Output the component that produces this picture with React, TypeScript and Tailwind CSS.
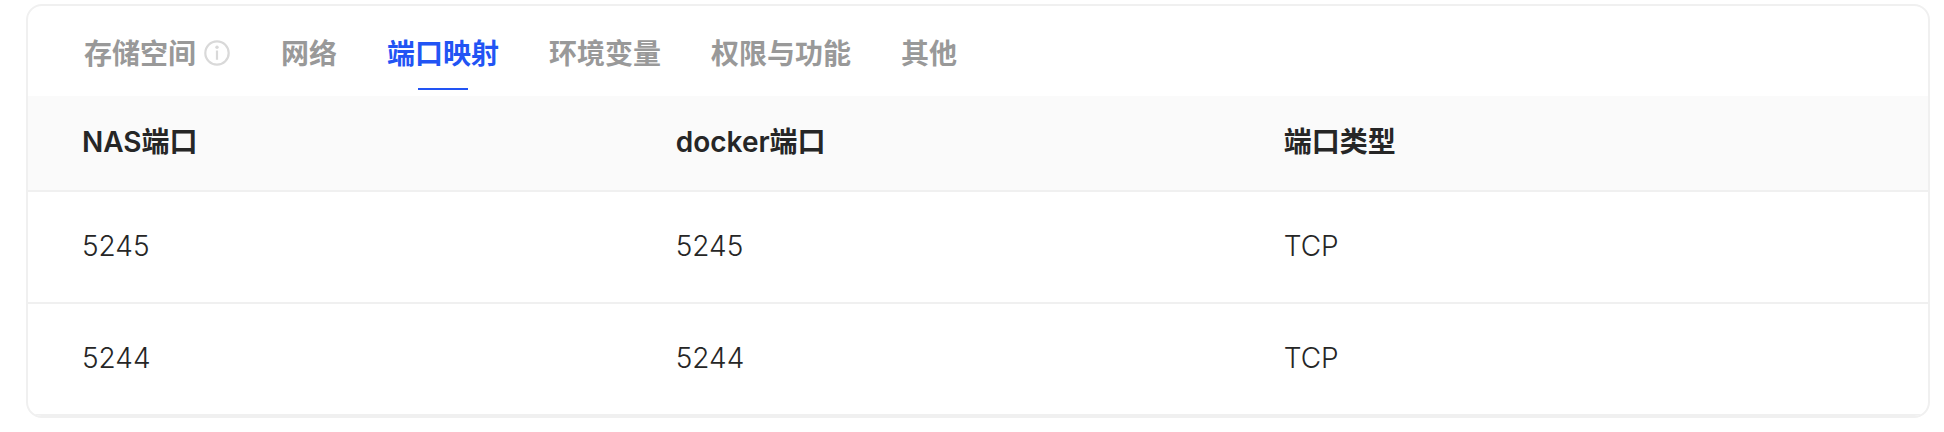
const tabs = ["存储空间", "网络", "端口映射", "环境变量", "权限与功能", "其他"];

const rows = [
  ["5245", "5245", "TCP"],
  ["5244", "5244", "TCP"],
];

function InfoIcon() {
  return (
    <svg viewBox="0 0 26 26" className="size-[26px] text-[#d9d9d9]" fill="none" stroke="currentColor" strokeWidth="2.2" aria-hidden="true">
      <circle cx="13" cy="13" r="11.7" />
      <path d="M13 10.4v9.4" />
      <circle cx="13" cy="7.2" r="1.7" fill="currentColor" stroke="none" />
    </svg>
  );
}

export default function App() {
  return (
    <main className="bg-white pt-1 pr-[14px] pb-[14px] pl-[26px] font-['Inter','Noto_Sans_CJK_SC',sans-serif] text-[28px] leading-10 text-[#262626]">
      <section className="overflow-hidden rounded-2xl border-2 border-[#f0f0f0]">
        <nav className="flex gap-[50px] px-14">
          {tabs.map((tab) => (
            <button
              key={tab}
              type="button"
              className={
                tab === "端口映射"
                  ? "flex h-[90px] flex-col items-center pt-7 font-bold text-[#2254f4]"
                  : "flex h-[90px] items-start gap-2 pt-7 font-bold text-[#999999]"
              }
            >
              {tab}
              {tab === "存储空间" && <span className="pt-1.5 pr-px"><InfoIcon /></span>}
              {tab === "端口映射" && <span className="mt-[14px] h-[2px] w-[50px] bg-[#2254f4]" />}
            </button>
          ))}
        </nav>
        <table className="w-full table-fixed border-separate border-spacing-0 text-left">
          <colgroup>
            <col className="w-[31.25%]" />
            <col className="w-[32%]" />
            <col />
          </colgroup>
          <thead className="bg-[#fafafa]">
            <tr className="h-24">
              {["NAS端口", "docker端口", "端口类型"].map((h) => (
                <th key={h} className="border-b-2 border-[#f0f0f0] pb-0.5 pl-[54px] font-semibold">{h}</th>
              ))}
            </tr>
          </thead>
          <tbody>
            {rows.map((row) => (
              <tr key={row[0]} className="h-28">
                {row.map((cell, i) => (
                  <td key={i} className="border-b-2 border-[#f0f0f0] pb-0.5 pl-[54px] font-light">{cell}</td>
                ))}
              </tr>
            ))}
          </tbody>
        </table>
      </section>
    </main>
  );
}
